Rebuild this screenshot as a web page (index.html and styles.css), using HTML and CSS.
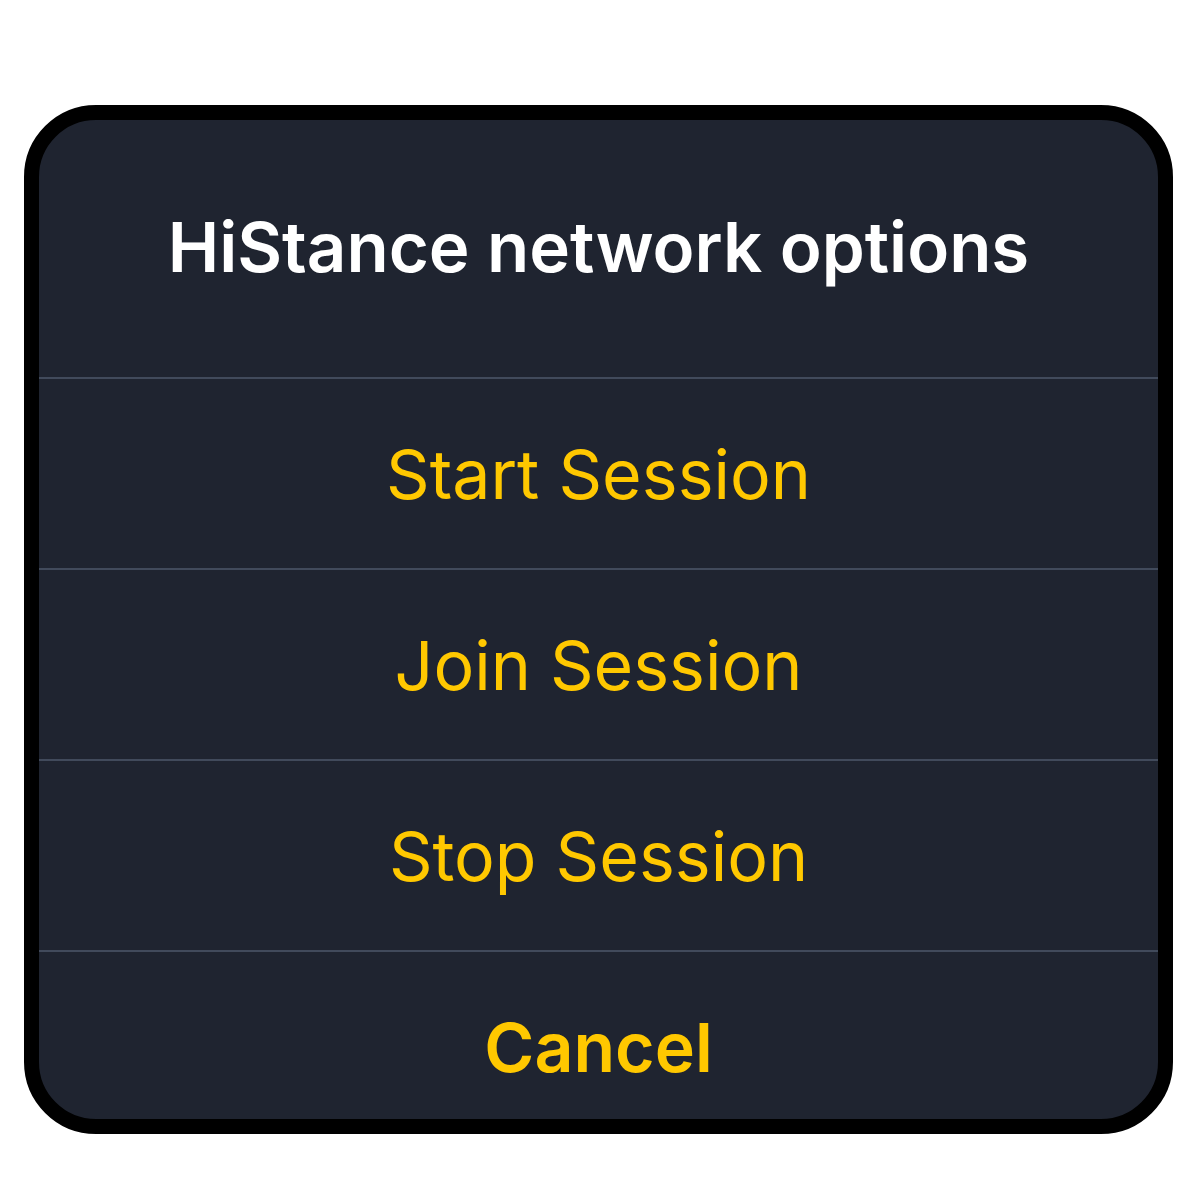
FILE: index.html
```html
<!DOCTYPE html>
<html>
<head>
<meta charset="utf-8">
<link rel="stylesheet" href="styles.css">
</head>
<body>
<div class="sheet">
  <div class="title">HiStance network options</div>
  <div class="row">Start Session</div>
  <div class="row">Join Session</div>
  <div class="row">Stop Session</div>
  <div class="row cancel">Cancel</div>
</div>
</body>
</html>
```
FILE: styles.css
```css
html, body {
  margin: 0;
  padding: 0;
  background: #ffffff;
}
body {
  padding-top: 105px;
  padding-left: 24px;
  font-family: Inter, "Noto Sans", sans-serif;
}
.sheet {
  box-sizing: border-box;
  width: 1149px;
  height: 1029px;
  border: 15px solid #000;
  border-radius: 72px;
  background: #1f2430;
  overflow: hidden;
  display: flex;
  flex-direction: column;
}
.title {
  flex: 0 0 257px;
  display: flex;
  align-items: center;
  justify-content: center;
  color: #ffffff;
  font-size: 69px;
  font-weight: 600;
  padding-bottom: 4px;
  box-sizing: border-box;
}
.row {
  flex: 0 0 191px;
  box-sizing: border-box;
  border-top: 2px solid #414a5b;
  display: flex;
  align-items: center;
  justify-content: center;
  color: #ffc800;
  font-size: 68px;
  font-weight: 400;
}
.row.cancel {
  font-weight: 600;
}
```
